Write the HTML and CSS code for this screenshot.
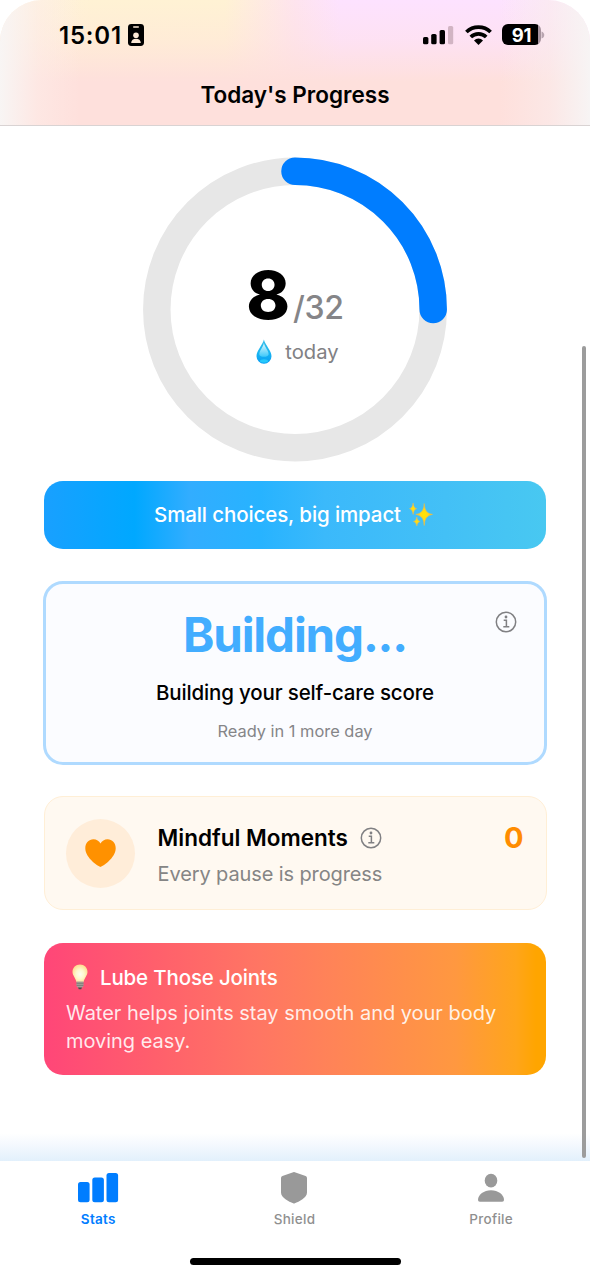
FILE: index.html
```html
<!DOCTYPE html>
<html lang="en">
<head>
<meta charset="utf-8">
<title>Today's Progress</title>
<link rel="stylesheet" href="styles.css">
</head>
<body>
<div class="screen">
  <header class="header">
    <div class="status">
      <div class="status-left">
        <span class="clock">15:01</span>
        <svg class="badge-icon" width="16" height="22" viewBox="0 0 16 22"><rect width="16" height="22" rx="3.4" fill="#000"/><rect x="5" y="2.2" width="6" height="1.5" rx=".7" fill="#fde9d6"/><circle cx="8" cy="11.2" r="2.8" fill="#fde9d6"/><path d="M3.2 18.9c0-2.6 2-4.2 4.8-4.2s4.8 1.6 4.8 4.2z" fill="#fde9d6"/></svg>
      </div>
      <div class="status-right">
        <svg width="31" height="20" viewBox="0 0 31 20"><rect x="0" y="12" width="5.4" height="7.3" rx="1.6"/><rect x="8.2" y="9" width="5.4" height="10.3" rx="1.6"/><rect x="16.6" y="5" width="5.4" height="14.3" rx="1.6"/><rect x="25" y="1" width="5.2" height="18.3" rx="1.6" fill="#d1b4c3"/></svg>
        <svg class="wifi" width="27" height="20" viewBox="0 0 27 20"><g fill="none" stroke="#000" stroke-width="3.700"><path d="M1.400 7a17.300 17.300 0 0 1 24.200 0"/><path d="M5.800 12a10.900 10.900 0 0 1 15.400 0"/></g><path d="M9 15.400a6.300 6.300 0 0 1 9 0l-4.500 4.500z"/></svg>
        <div class="battery"><span>91</span><svg class="battery-tip" width="4" height="8" viewBox="0 0 4 8"><path d="M.5.5C4.200 1.500 4.200 6.500.5 7.500z" fill="#b9a5b0"/></svg></div>
      </div>
    </div>
    <h1 class="title">Today's Progress</h1>
  </header>

  <main class="content">
    <section class="ring">
      <svg class="ring-art" viewBox="0 0 304 304"><circle cx="152" cy="151.500" r="138.200" fill="none" stroke="#e7e7e7" stroke-width="27.500"/><path d="M152 13.300A138.200 138.200 0 0 1 290.200 151.500" fill="none" stroke="#007dff" stroke-width="27.500" stroke-linecap="round"/></svg>
      <div class="ring-label">
        <div class="count"><span class="count-now">8</span><span class="count-goal">/32</span></div>
        <div class="today">
          <svg width="16" height="26" viewBox="0 0 16 26"><defs><linearGradient id="drop" x2="0" y2="1"><stop stop-color="#36bce8"/><stop offset=".55" stop-color="#18b5f2"/><stop offset="1" stop-color="#079cf3"/></linearGradient><linearGradient id="shine" x2="0" y2="1"><stop stop-color="#e3f8fc"/><stop offset="1" stop-color="#3cc8fa"/></linearGradient></defs><path d="M7.900.6C6.500 6.500.5 11.500.5 17.300a7.500 7.500 0 0 0 15 0C15.500 11.500 9.300 6.500 7.900.6z" fill="url(#drop)"/><path d="M7.900 4C6.900 8.500 3.100 12 3.300 15.500c.3 3 8.700 3.300 9.300 0C13 12 8.900 8.500 7.900 4z" fill="url(#shine)"/><ellipse cx="8" cy="22" rx="4" ry="1.700" fill="#26c9fb"/></svg>
          <span>today</span>
        </div>
      </div>
    </section>

    <section class="banner">
      <span>Small choices, big impact</span>
      <svg width="24" height="25" viewBox="0 0 24 25"><defs><radialGradient id="gold"><stop stop-color="#ffe600"/><stop offset=".5" stop-color="#ffd51c"/><stop offset="1" stop-color="#eda64f"/></radialGradient></defs><g fill="url(#gold)"><path d="M15.200 1.500Q15.500 11.700 23.500 12.400Q15.500 13.100 15.200 23.500Q14.900 13.100 6.800 12.400Q14.900 11.700 15.200 1.500z" stroke="#f8c334" stroke-width=".5"/><path d="M4.100 1Q4.600 6.200 7.700 6.700Q4.600 7.200 4.100 12.400Q3.600 7.200.5 6.700Q3.600 6.200 4.100 1z" stroke="#f2c045" stroke-width=".5"/><path d="M7.800 15Q8.200 19 11.100 19.500Q8.200 20 7.800 24Q7.400 20 4.500 19.500Q7.400 19 7.800 15z" stroke="#f2c045" stroke-width=".5"/></g></svg>
    </section>

    <section class="score">
      <svg class="info score-info" viewBox="0 0 22 22"><circle cx="11" cy="11" r="9.700"/><path d="M8.700 9.300h2.700v6.200M8.300 15.700h6"/><circle class="dot" cx="11" cy="6" r="1.400"/></svg>
      <div class="score-value">Building...</div>
      <div class="score-title">Building your self-care score</div>
      <div class="score-note">Ready in 1 more day</div>
    </section>

    <section class="mindful">
      <div class="heart"><svg width="31" height="28" viewBox="0 0 31 28"><path d="M15.500 28C14.500 28 .3 19.500.3 9.300.3 3.800 3.900.3 8.400.3c3.100 0 5.700 1.600 7.100 4.300C16.900 1.900 19.500.3 22.600.3c4.500 0 8.100 3.500 8.100 9C30.700 19.500 16.500 28 15.500 28z" fill="#ff9100"/></svg></div>
      <div class="mindful-text">
        <div class="mindful-title"><span>Mindful Moments</span><svg class="info" viewBox="0 0 22 22"><circle cx="11" cy="11" r="9.700"/><path d="M8.700 9.300h2.700v6.200M8.300 15.700h6"/><circle class="dot" cx="11" cy="6" r="1.400"/></svg></div>
        <div class="mindful-note">Every pause is progress</div>
      </div>
      <div class="mindful-count">0</div>
    </section>

    <section class="tip">
      <div class="tip-head">
        <svg width="16" height="26" viewBox="0 0 16 26"><defs><radialGradient id="bulb" cx=".5" cy=".55" r=".6"><stop stop-color="#fffef2"/><stop offset=".45" stop-color="#fff8cd"/><stop offset="1" stop-color="#ffd783"/></radialGradient></defs><path d="M8 .6C3.700.6.5 3.800.5 7.900c0 3.600 3.100 5.600 3.900 10.100h7.200c.8-4.500 3.900-6.500 3.900-10.100C15.500 3.800 12.300.6 8 .6z" fill="url(#bulb)"/><path d="M4.500 17.600h7v4.500l-1.600 1.700H6.100l-1.600-1.700z" fill="#a5a099"/><path d="M4.500 19.300h7M4.600 21.400h6.800" stroke="#706f6d" stroke-width=".7"/><path d="M6 23.400h4l-.8 1.900H6.800z" fill="#4b4b4b"/></svg>
        <span>Lube Those Joints</span>
      </div>
      <p class="tip-body">Water helps joints stay smooth and your body<br>moving easy.</p>
    </section>
    <div class="scrollbar"></div>
  </main>

  <nav class="tabs">
    <div class="tab active"><svg width="42" height="32" viewBox="0 0 42 32"><rect x="1" y="10" width="11.600" height="20.200" rx="2.500"/><rect x="15.300" y="5.500" width="11.600" height="24.700" rx="2.500"/><rect x="29.500" y="1" width="11.600" height="29.200" rx="2.500"/></svg><span>Stats</span></div>
    <div class="tab"><svg width="28" height="32" viewBox="0 0 28 32"><path d="M14 0q.7 0 1.500.4L25.600 4Q27 4.500 27 6v14.500c0 5.500-8 9-12.200 10.800q-.8.4-1.600 0C9 29.500 1 26 1 20.500V6q0-1.500 1.400-2L12.500.4Q13.300 0 14 0z"/></svg><span>Shield</span></div>
    <div class="tab"><svg width="28" height="32" viewBox="0 0 28 32"><ellipse cx="14" cy="8.700" rx="6.300" ry="6.900"/><path d="M1 28C1 22.500 7 18.200 14 18.200S27 22.500 27 28q0 1.800-1.800 1.800H2.800Q1 29.800 1 28z"/></svg><span>Profile</span></div>
    <div class="home-bar"></div>
  </nav>
</div>
</body>
</html>
```

FILE: styles.css
```css
* { box-sizing: border-box; }
body { margin: 0; background: #fff; font-family: Inter, "Liberation Sans", sans-serif; color: #000; }
.screen { width: 590px; height: 1276px; display: flex; flex-direction: column; overflow: hidden; background: #fff; }
.header {
  height: 126px; flex: none; border-bottom: 1px solid #d9d3d3; border-radius: 42px 42px 0 0;
  background:
    linear-gradient(90deg, #f8f5f4 0, rgba(253,238,234,.5) 38px, rgba(254,224,220,0) 80px, rgba(254,224,220,0) 500px, rgba(250,236,236,.6) 550px, #f7f4f4 100%),
    linear-gradient(180deg, rgba(254,224,220,0) 0, rgba(254,224,220,.35) 40px, #fee0dc 82px),
    linear-gradient(90deg, #fdf0e0 0, #fff2d4 90px, #fff2d4 225px, #fee4ee 295px, #fde2ff 340px, #fde2ff 500px, #fbe8fb 100%);
}
.status { display: flex; justify-content: space-between; align-items: center; height: 70px; padding: 0 49px 0 59px; }
.status-left { display: flex; align-items: center; gap: 6.500px; }
.clock { padding-top: 1px; font-size: 24px; font-weight: 560; line-height: 28px; letter-spacing: .8px; }
.status-right { display: flex; align-items: center; gap: 10px; }
.status-right > svg:first-child { margin-right: 1px; }
.battery { position: relative; width: 39px; height: 21px; margin-top: -1px; border-radius: 6px; display: flex; align-items: center; justify-content: center; background: linear-gradient(90deg, #000 36px, #a6929c 36px); color: #fff; font-size: 18.500px; font-weight: 700; letter-spacing: -.3px; }
.battery-tip { position: absolute; right: -4px; top: 7px; }
.title { margin: 11px 0 0; text-align: center; font-size: 22.500px; line-height: 28px; font-weight: 600; }
.content { position: relative; flex: 1; display: flex; flex-direction: column; padding: 32px 43px 0; background: linear-gradient(#fff 0, #fff 1007px, #f5f9fe 1018px, #e2f0fc 1035px); }
.ring { display: grid; width: 304px; height: 304px; margin: 0 auto 18.500px; }
.ring-art { grid-area: 1 / 1; width: 304px; height: 304px; overflow: visible; }
.ring-label { grid-area: 1 / 1; display: flex; flex-direction: column; align-items: center; padding-top: 100.500px; }
.count { display: flex; align-items: baseline; gap: 4px; height: 72px; line-height: 72px; }
.count-now { font-size: 66px; font-weight: 780; letter-spacing: -1px; }
.count-goal { font-size: 32px; font-weight: 480; letter-spacing: -.3px; color: #858588; }
.today { display: flex; align-items: center; gap: 13px; height: 26px; margin: 8px 0 0 3px; font-size: 20.200px; color: #818184; }
.today span { margin-top: -1px; }
.today svg { margin-left: 2px; }
.banner { height: 68.500px; margin: 0 1px; flex: none; border-radius: 19px; display: flex; align-items: center; justify-content: center; gap: 8px; padding-right: 3px; color: #fff; font-size: 20.500px; font-weight: 500; letter-spacing: -.11px; background: linear-gradient(90deg, #19a0ff 0, #00a8ff 18%, #32adff 29%, #27b3ff 43%, #3bb9fb 56%, #43c0f6 80%, #48c8f1 100%); }
.score { position: relative; height: 184px; flex: none; margin-top: 32px; border: 3px solid #afdaff; border-radius: 20px; background: #fbfcff; text-align: center; padding-top: 22px; }
.score-value { font-size: 47.500px; line-height: 57px; font-weight: 700; letter-spacing: -1.150px; color: #42adff; }
.score-title { margin-top: 17px; font-size: 20.500px; line-height: 26px; font-weight: 500; letter-spacing: -.16px; }
.score-note { margin-top: 15px; font-size: 16.400px; line-height: 20px; color: #858588; }
.info { width: 22px; height: 22px; fill: none; stroke: #808083; stroke-width: 1.500; }
.info .dot { fill: #808083; stroke: none; }
.score-info { position: absolute; right: 27px; top: 26.500px; }
.mindful { height: 114px; flex: none; margin: 31px .5px 0; border: 1px solid #ffefd6; border-radius: 19px; background: #fff9f1; display: flex; align-items: center; padding: 0 22px 0 21.500px; }
.heart { width: 69px; height: 69px; border-radius: 50%; background: #ffedd9; display: flex; align-items: center; justify-content: center; }
.mindful-text { flex: 1; padding: 5px 0 0 22.500px; }
.mindful-title { display: flex; align-items: center; gap: 12px; font-size: 22.500px; line-height: 28px; font-weight: 600; }
.mindful-note { margin-top: 9px; font-size: 20px; line-height: 26px; letter-spacing: -.11px; color: #858585; }
.mindful-count { align-self: flex-start; margin-top: 23px; font-size: 29px; line-height: 36px; font-weight: 700; color: #ff8c00; }
.tip { height: 132px; flex: none; margin: 32.500px 1px 0; border-radius: 19px; padding: 21px 22px; color: #fff; background: linear-gradient(90deg, #ff4678 0, #ff5f6c 22%, #ff7663 43%, #ff8457 58%, #ff9840 82%, #ffa51b 94%, #ffa500 98%); }
.tip-head { display: flex; align-items: center; gap: 12px; height: 27px; padding-left: 6px; font-size: 20.500px; font-weight: 500; letter-spacing: -.16px; }
.tip-body { margin: 9.500px 0 0; font-size: 20px; line-height: 27.500px; letter-spacing: -.03px; white-space: nowrap; color: rgba(255,255,255,.88); }
.scrollbar { position: absolute; left: 582px; top: 220px; width: 4px; height: 812px; border-radius: 2px; background: #9c9c9c; }
.tabs { position: relative; height: 115px; flex: none; display: grid; grid-template-columns: repeat(3, 1fr); align-items: start; padding-top: 11px; background: #fff; }
.tab { display: flex; flex-direction: column; align-items: center; gap: 6px; font-size: 13.500px; line-height: 18px; font-weight: 500; letter-spacing: .3px; color: #8f8f8f; }
.tab svg { fill: #999; }
.tab:not(.active) { margin-left: -1px; }
.tab.active { font-weight: 600; color: #007dff; }
.tab.active svg { fill: #007dff; }
.home-bar { position: absolute; left: 190px; bottom: 11px; width: 211px; height: 7px; border-radius: 4px; background: #000; }
```
